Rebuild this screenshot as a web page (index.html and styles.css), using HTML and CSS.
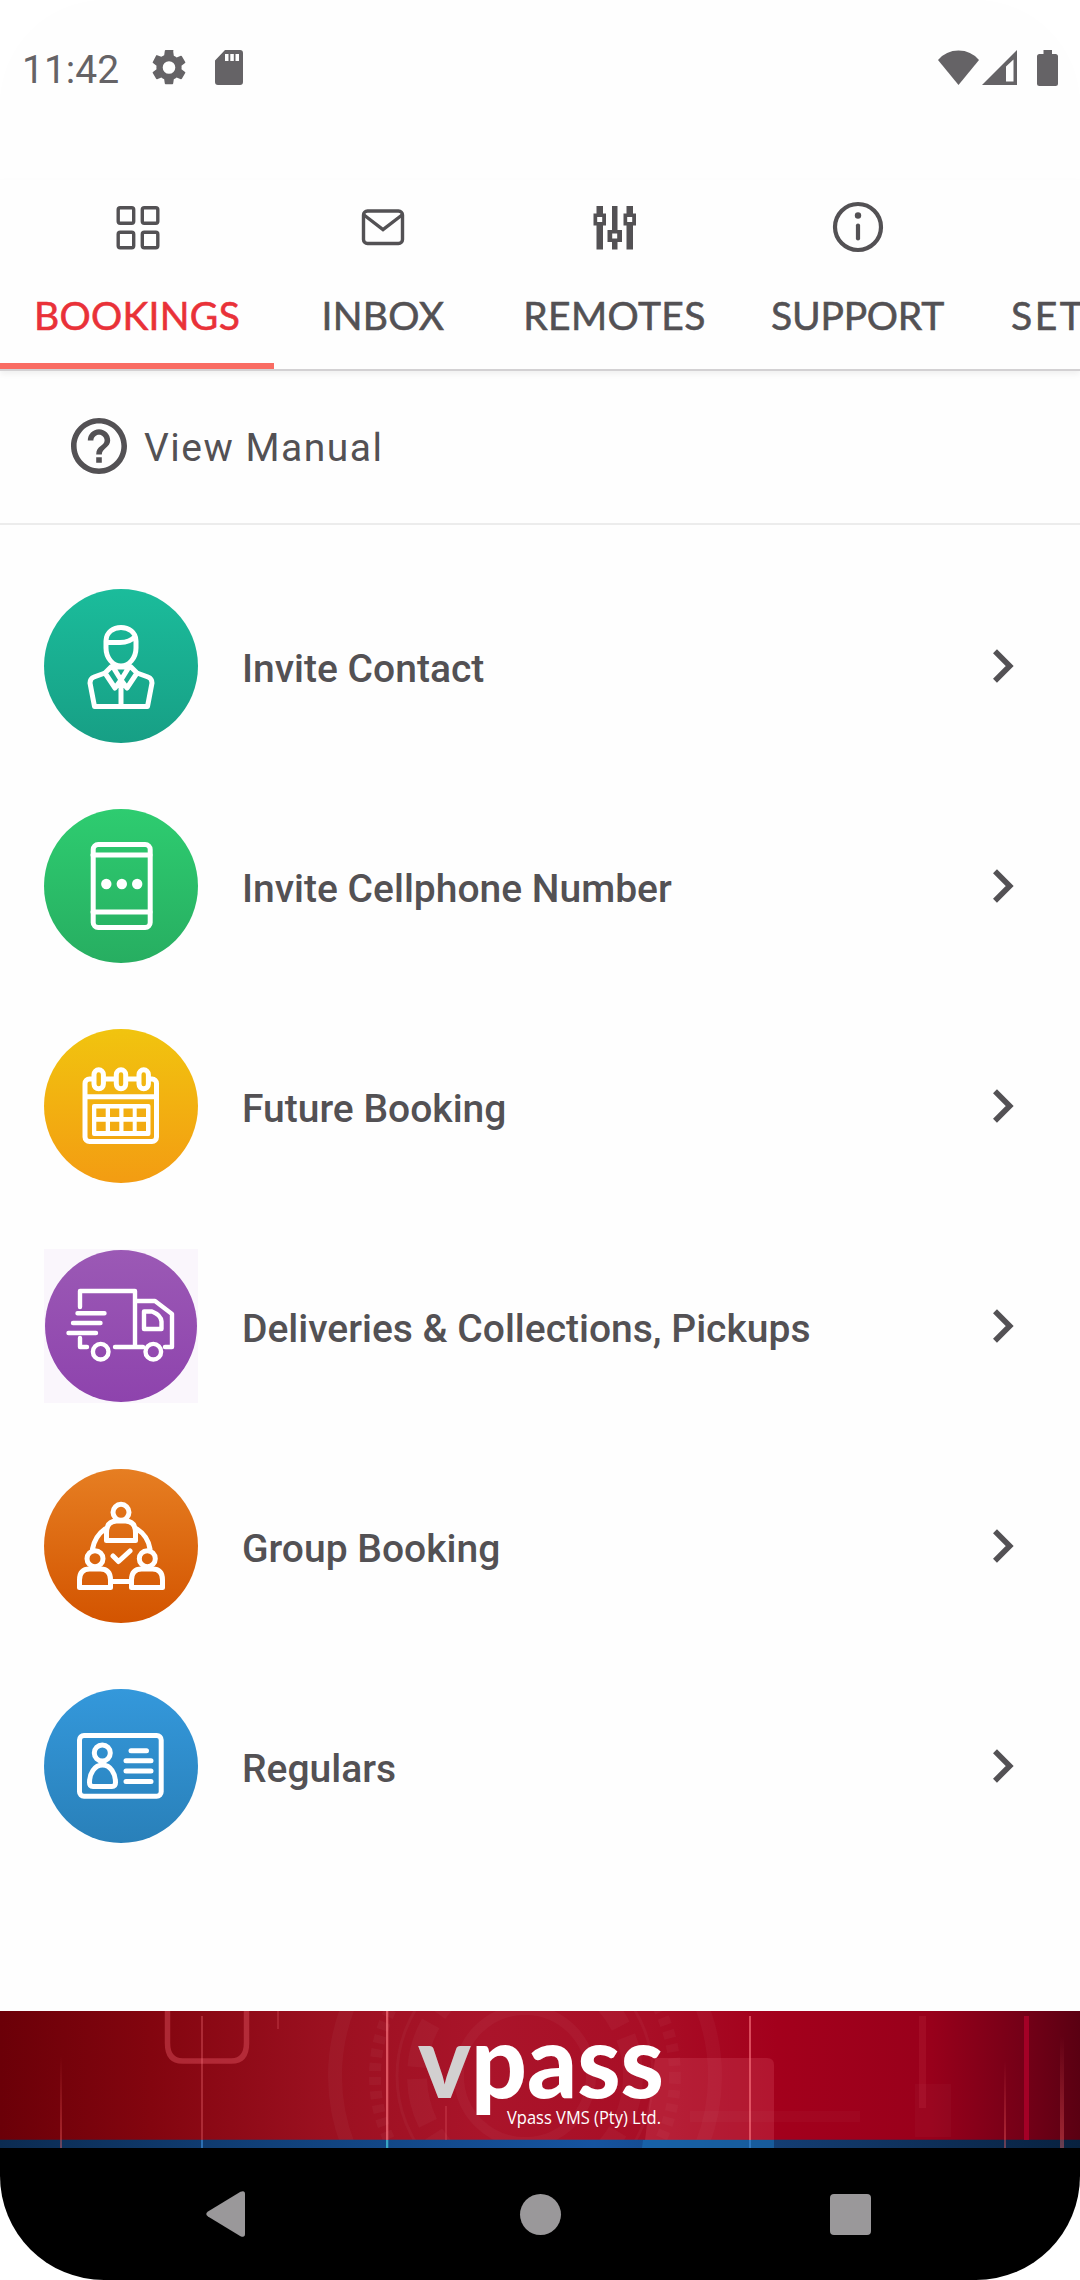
FILE: index.html
```html
<!DOCTYPE html>
<html lang="en">
<head>
<meta charset="utf-8">
<title>Vpass</title>
<link rel="stylesheet" href="styles.css">
</head>
<body>
<div class="phone">
  <header class="status">
    <span class="time">11:42</span>
    <svg class="s-gear" viewBox="2.3 2 19.4 20"><path d="M19.14 12.94c.04-.3.06-.61.06-.94s-.02-.64-.07-.94l2.03-1.58a.49.49 0 0 0 .12-.61l-1.92-3.32a.49.49 0 0 0-.59-.22l-2.39.96c-.5-.38-1.03-.7-1.62-.94l-.36-2.54A.48.48 0 0 0 13.920 2h-3.840a.48.48 0 0 0-.47.41l-.36 2.54c-.59.24-1.13.57-1.62.94l-2.39-.96a.48.48 0 0 0-.59.22L2.740 8.870a.48.48 0 0 0 .12.61l2.030 1.580c-.05.3-.09.63-.09.94s.02.64.07.94l-2.030 1.580a.49.49 0 0 0-.12.61l1.920 3.320c.12.22.37.29.59.22l2.390-.96c.5.38 1.030.7 1.620.94l.36 2.540c.05.24.24.41.48.41h3.840c.24 0 .44-.17.47-.41l.36-2.540c.59-.24 1.130-.56 1.620-.94l2.390.96c.22.08.47 0 .59-.22l1.920-3.320a.48.48 0 0 0-.12-.61zM12 15.600a3.600 3.600 0 1 1 0-7.200 3.600 3.600 0 0 1 0 7.200z"/></svg>
    <svg class="s-sd" viewBox="0 0 28 35"><path fill-rule="evenodd" d="M10 0h15a3 3 0 0 1 3 3v29a3 3 0 0 1-3 3H3a3 3 0 0 1-3-3V10.500zM10 4v7h3.500V4zm5.300 0v7h3.500V4zm5.200 0v7H24V4z"/></svg>
    <span class="spacer"></span>
    <svg class="s-wifi" viewBox="0 0 41 35"><path d="M0 10Q8 .5 20.500.5T41 10L20.500 35z"/></svg>
    <svg class="s-signal" viewBox="0 0 35 35"><path fill-rule="evenodd" d="M35 0v35H0zM31.500 9.500L24 16.500V31.500h7.500z"/></svg>
    <svg class="s-battery" viewBox="0 0 21 36"><path d="M6.500 0h8.500v4h3.500A2.500 2.500 0 0 1 21 6.500v27a2.500 2.500 0 0 1-2.500 2.500h-16A2.500 2.500 0 0 1 0 33.500v-27A2.500 2.500 0 0 1 2.500 4h4z"/></svg>
  </header>

  <nav class="tabs">
    <a class="tab active t-bookings">
      <svg class="tab-icon" viewBox="0 0 54 54"><g class="line"><rect x="8.200" y="7.700" width="15.500" height="15.500" rx="2"/><rect x="32.300" y="7.700" width="15.500" height="15.500" rx="2"/><rect x="8.200" y="32.300" width="15.500" height="15.500" rx="2"/><rect x="32.300" y="32.300" width="15.500" height="15.500" rx="2"/></g></svg>
      <span>BOOKINGS</span>
    </a>
    <a class="tab t-inbox">
      <svg class="tab-icon" viewBox="0 0 54 54"><g class="line"><rect x="7.500" y="11" width="39" height="32.500" rx="4"/><path d="M8 15l19 14.500L46 15"/></g></svg>
      <span>INBOX</span>
    </a>
    <a class="tab t-remotes">
      <svg class="tab-icon" viewBox="0 0 54 54"><path d="M8.500 6h6.500v7.500h3v12h-3v24h-6.500v-24h-3v-12h3zm15.500 0h5.500v24h4.500v12h-4.500v7.500H24v-7.500h-4.500V30H24zm14.500 0h6.500v7.500h3v12h-3v24h-6.500v-24h-3v-12h3z"/><path class="hole" d="M9.200 17h5v5h-5zm15 16.500h5v5h-5zm15-16.500h5v5h-5z"/></svg>
      <span>REMOTES</span>
    </a>
    <a class="tab t-support">
      <svg class="tab-icon" viewBox="0 0 54 54"><circle class="ring" cx="27" cy="27" r="23"/><circle cx="27" cy="15.500" r="3.200"/><path class="ring" stroke-linecap="round" d="M27 25.500v13"/></svg>
      <span>SUPPORT</span>
    </a>
    <a class="tab t-settings">
      <span class="tab-icon"></span>
      <span>SETTINGS</span>
    </a>
  </nav>

  <section class="manual">
    <svg class="help" viewBox="2 2 20 20"><path d="M11 18h2v-2h-2v2zm1-16C6.480 2 2 6.480 2 12s4.480 10 10 10 10-4.480 10-10S17.520 2 12 2zm0 18c-4.410 0-8-3.590-8-8s3.590-8 8-8 8 3.590 8 8-3.590 8-8 8zm0-14c-2.210 0-4 1.790-4 4h2c0-1.100.9-2 2-2s2 .9 2 2c0 2-3 1.750-3 5h2c0-2.250 3-2.500 3-5 0-2.210-1.790-4-4-4z"/></svg>
    <span>View Manual</span>
  </section>

  <main class="menu">
    <a class="row">
      <svg class="badge teal" viewBox="0 0 154 154"><path d="M62 52c0-18 30-18 30 0v7c0 10-7 18-15 18s-15-8-15-18zM62 53.500h14q10 0 15-6M68 78h18M69 78l8 13 8-13M67 78l-6 6 10 15 6-8 6 8 10-15-6-6M61 84l-11 4q-4 1.500-4 6l4.500 23.500h53L108 94q0-4.500-4-6l-11-4M77 91v26"/></svg>
      <span class="label">Invite Contact</span>
      <svg class="chev" viewBox="0 0 21 34"><path d="M2 2.300l14.700 14.700L2 31.700"/></svg>
    </a>
    <a class="row">
      <svg class="badge green" viewBox="0 0 154 154"><rect x="49.200" y="35.500" width="57" height="83" rx="5"/><path d="M49 46h57M49 103h57"/><g class="solid"><circle cx="62.300" cy="75" r="5.200"/><circle cx="77.800" cy="75" r="5.200"/><circle cx="93.200" cy="75" r="5.200"/></g></svg>
      <span class="label">Invite Cellphone Number</span>
      <svg class="chev" viewBox="0 0 21 34"><path d="M2 2.300l14.700 14.700L2 31.700"/></svg>
    </a>
    <a class="row">
      <svg class="badge yellow" viewBox="0 0 154 154"><path d="M49 50h-3.500a4.500 4.500 0 0 0-4.500 4.500V108a4.500 4.500 0 0 0 4.500 4.500h62.500a4.500 4.500 0 0 0 4.500-4.500V54.500A4.500 4.500 0 0 0 108 50h-3M60 50h11M83 50h11M41 67.700h71.500"/><rect x="50" y="40.800" width="9.400" height="19" rx="4.700"/><rect x="72.300" y="40.800" width="9.400" height="19" rx="4.700"/><rect x="95" y="40.800" width="9.400" height="19" rx="4.700"/><path class="solid" fill-rule="evenodd" d="M50 75h54.500q2 0 2 2v28q0 2-2 2H50q-2 0-2-2V77q0-2 2-2zM52.300 79.500v8.500h9.400v-8.500zm13.700 0v8.500h9.300v-8.500zm13.500 0v8.500h9.200v-8.500zm13.200 0v8.500h9.300v-8.500zM52.300 92.700v9.300h9.400v-9.300zm13.700 0v9.300h9.300v-9.300zm13.500 0v9.300h9.200v-9.300zm13.200 0v9.300h9.300v-9.300z"/></svg>
      <span class="label">Future Booking</span>
      <svg class="chev" viewBox="0 0 21 34"><path d="M2 2.300l14.700 14.700L2 31.700"/></svg>
    </a>
    <a class="row">
      <span class="plate"><svg class="badge purple" viewBox="1 1 152 152"><g class="thin"><path d="M36 58V42h55v56M36 89v9h7M71 98h28M33.500 64.300h27M29 74h27.500M24.500 84H52M91 52h20l17 13v33h-7M100 62.500h8q9 3.500 9.500 10V80H100z"/><circle cx="56.700" cy="102.700" r="7.800"/><circle cx="109.300" cy="102.700" r="7.800"/></g></svg></span>
      <span class="label">Deliveries &amp; Collections, Pickups</span>
      <svg class="chev" viewBox="0 0 21 34"><path d="M2 2.300l14.700 14.700L2 31.700"/></svg>
    </a>
    <a class="row">
      <svg class="badge orange" viewBox="0 0 154 154"><circle cx="77" cy="43.300" r="8"/><path d="M62.500 71.500V64q0-12 10-12h9q10 0 10 12v7.500zM35.500 118.500V111q0-11 10-11h11q10 0 10 11v7.500zM87.500 118.500V111q0-11 10-11h11q10 0 10 11v7.500zM61 60q-10 7-12.500 20M93 60q11 7 13 20M67 112.500h20M69 87l5.500 5.500L86 82"/><circle cx="51" cy="89.700" r="8"/><circle cx="103.300" cy="89.700" r="8"/></svg>
      <span class="label">Group Booking</span>
      <svg class="chev" viewBox="0 0 21 34"><path d="M2 2.300l14.700 14.700L2 31.700"/></svg>
    </a>
    <a class="row">
      <svg class="badge blue" viewBox="0 0 154 154"><rect x="35.500" y="46.500" width="81.700" height="60.700" rx="4.500"/><circle cx="58.300" cy="64" r="8"/><path d="M49 97.500q-3.500 0-3.500-4c0-9 5-17.500 13-17.500s13 8.500 13 17.500q0 4-3.500 4zM87 61.700h15.500M82 71.800h25M82 82h25M82 92.500h25"/></svg>
      <span class="label">Regulars</span>
      <svg class="chev" viewBox="0 0 21 34"><path d="M2 2.300l14.700 14.700L2 31.700"/></svg>
    </a>
  </main>

  <svg class="banner" viewBox="0 0 1080 137">
    <defs>
      <linearGradient id="red"><stop offset="0" stop-color="#6b0008"/><stop offset=".14" stop-color="#83050f"/><stop offset=".3" stop-color="#9b1020"/><stop offset=".45" stop-color="#aa142a"/><stop offset=".6" stop-color="#a90e26"/><stop offset=".72" stop-color="#a3001c"/><stop offset=".86" stop-color="#99001b"/><stop offset=".95" stop-color="#730017"/><stop offset="1" stop-color="#5a0012"/></linearGradient>
      <linearGradient id="navy"><stop offset="0" stop-color="#0c2b51"/><stop offset=".25" stop-color="#114079"/><stop offset=".55" stop-color="#1654a0"/><stop offset=".7" stop-color="#153f76"/><stop offset="1" stop-color="#08213f"/></linearGradient>
      <linearGradient id="fade" x2="0" y2="1"><stop offset="0" stop-color="#f66" stop-opacity="0"/><stop offset="1" stop-color="#f66" stop-opacity=".4"/></linearGradient>
    </defs>
    <rect width="1080" height="129" fill="url(#red)"/>
    <g fill="none" stroke="#fff" stroke-opacity=".035">
      <circle cx="525" cy="65" r="190" stroke-width="14"/>
      <circle cx="525" cy="65" r="150" stroke-width="12" stroke-dasharray="8 6"/>
      <circle cx="525" cy="65" r="128" stroke-width="3"/>
      <circle cx="525" cy="65" r="108" stroke-width="20" stroke-dasharray="46 12"/>
      <circle cx="525" cy="65" r="66" stroke-width="10"/>
    </g>
    <path d="M167.500 0v32q0 18 15 18h49q15 0 15-18V0" fill="none" stroke="#e0535f" stroke-opacity=".45" stroke-width="5.500"/>
    <rect y="128.700" width="1080" height="8.300" fill="url(#navy)"/>
    <path d="M655 47h112q7 0 7 7v75H645z" fill="#e0566c" fill-opacity=".25"/>
    <path d="M643 129h131v8H642z" fill="#1a6fb5" fill-opacity=".6"/>
    <g fill="#ff7a83">
      <rect x="60" y="45" width="2" height="92" fill="url(#fade)"/>
      <rect x="201" y="5" width="2" height="124" opacity=".3"/>
      <rect x="277" width="2" height="18" opacity=".2"/>
      <rect x="386" width="2.300" height="129" opacity=".65"/>
      <rect x="445" y="95" width="2" height="34" opacity=".2"/>
      <rect x="749" y="5" width="2" height="124" opacity=".6"/>
      <rect x="919" y="5" width="7" height="92" opacity=".09"/>
      <rect x="1004" y="50" width="2" height="87" fill="url(#fade)"/>
    </g>
    <path d="M386 129h2.300v8H386z" fill="#39a6c4"/>
    <path d="M749 129h2v8h-2zM201 129h2v8h-2z" fill="#3a86cf" opacity=".7"/>
    <path d="M690 100h170v11H690zM915 73h36v53h-36z" fill="#fff" opacity=".025"/>
    <rect x="1024" y="5" width="5" height="124" fill="#b0002b" opacity=".8"/>
    <rect x="1060" y="25" width="4" height="112" fill="url(#fade)"/>
    <g class="logo">
      <text class="logo-v" x="418" y="87" textLength="53" lengthAdjust="spacingAndGlyphs">v</text>
      <text x="471" y="87" textLength="193" lengthAdjust="spacingAndGlyphs">pass</text>
    </g>
    <text class="company" x="507" y="113" textLength="154" lengthAdjust="spacingAndGlyphs">Vpass VMS (Pty) Ltd.</text>
  </svg>

  <footer class="navbar">
    <svg class="back" viewBox="0 0 39 46"><path d="M2 20.500L34.500.8Q39-1 39 3v40q0 4-4.500 2.200L2 25.500q-3.500-2.500 0-5z"/></svg>
    <span class="home"></span>
    <span class="recent"></span>
  </footer>
</div>
</body>
</html>
```
FILE: styles.css
```css
* { box-sizing: border-box; }

body {
  margin: 0;
  background: #fff;
  font-family: Roboto, sans-serif;
  color: #535154;
}

.phone {
  display: flex;
  flex-direction: column;
  width: 1080px;
  height: 2280px;
  overflow: hidden;
  border-radius: 104px;
  background: #fefefe;
}

svg { display: block; flex: none; }

/* status bar */
.status {
  display: flex;
  align-items: flex-start;
  height: 180px;
  padding: 50px 22px 0 22px;
  color: #656366;
  fill: #656366;
}
.time { width: 130px; font-size: 39px; line-height: 40px; }
.s-gear { width: 34px; height: 35px; }
.s-sd { width: 28px; height: 35px; margin-left: 29px; }
.spacer { flex: 1; }
.s-wifi { width: 41px; height: 35px; }
.s-signal { width: 35px; height: 35px; margin-left: 3px; }
.s-battery { width: 21px; height: 36px; margin-left: 20px; }

/* tabs */
.tabs {
  display: flex;
  height: 191px;
  flex: none;
  overflow: hidden;
  border-bottom: 2px solid #d3d1d3;
  box-shadow: 0 3px 6px rgba(0, 0, 0, .06);
}
.tab {
  display: flex;
  flex: none;
  flex-direction: column;
  align-items: center;
  height: 189px;
  padding-top: 20px;
  font-family: Lato, sans-serif;
  font-size: 39px;
  font-weight: 400;
  line-height: 48px;
  white-space: nowrap;
  fill: #535154;
  -webkit-text-stroke: .6px currentColor;
}
.tab span:last-child { margin-top: 37px; }
.active { color: #e93138; border-bottom: 6px solid #f96c63; }
.t-bookings { width: 274px; letter-spacing: .3px; }
.t-inbox { width: 218px; letter-spacing: .3px; }
.t-remotes { width: 245px; letter-spacing: .4px; }
.t-support { width: 241px; letter-spacing: -.2px; }
.t-settings { align-items: flex-start; padding-left: 33px; letter-spacing: 2.5px; }
.tab-icon { width: 54px; height: 54px; flex: none; }
.line, .ring { fill: none; stroke: #535154; stroke-width: 3.4; }
.ring { stroke-width: 4.2; }
.hole { fill: #fefefe; }

/* manual link */
.manual {
  display: flex;
  align-items: center;
  flex: none;
  height: 154px;
  padding: 0 0 2px 71px;
  gap: 17px;
  border-bottom: 2px solid #ececec;
  font-size: 39px;
  letter-spacing: 1.5px;
}
.manual span { padding-top: 3px; }
.help { width: 56px; height: 56px; fill: #535154; }

/* booking options */
.menu {
  display: flex;
  flex: 1;
  flex-direction: column;
  gap: 66px;
  padding: 64px 66px 0 44px;
}
.row { display: flex; align-items: center; height: 154px; }
.label {
  flex: 1;
  padding: 5px 0 0 44px;
  font-size: 39px;
  font-weight: 500;
}
.badge {
  width: 154px;
  height: 154px;
  border-radius: 50%;
  fill: none;
  stroke: #fff;
  stroke-width: 5;
  stroke-linejoin: round;
  stroke-linecap: round;
}
.solid { fill: #fff; stroke: none; }
.thin { stroke-width: 4.4; }
.plate { padding: 1px; background: #faf6fc; }
.plate .badge { width: 152px; height: 152px; }
.teal { background: linear-gradient(#1bbc9b, #179f85); }
.green { background: linear-gradient(#2ecc70, #27ae61); }
.yellow { background: linear-gradient(#f1c40f, #f39c12); }
.purple { background: linear-gradient(#9b59b5, #8e43ad); }
.orange { background: linear-gradient(#e67e22, #d35400); }
.blue { background: linear-gradient(#3498db, #2980b9); }
.chev { width: 21px; height: 34px; fill: none; stroke: #535154; stroke-width: 5.6; }

/* brand banner */
.banner { width: 1080px; height: 137px; }
.logo { font-family: Lato, sans-serif; font-size: 101px; font-weight: 900; fill: #fff; }
.logo-v { fill: #d2d0d0; }
.company { font-family: "Open Sans", sans-serif; font-size: 19px; fill: #fff; }

/* system navigation */
.navbar {
  display: grid;
  grid-template-columns: 39px 41px 41px;
  column-gap: 275px;
  flex: none;
  align-items: center;
  height: 132px;
  padding-left: 206px;
  background: #000;
}
.back { width: 39px; height: 46px; fill: #9a989a; }
.home { width: 41px; height: 41px; border-radius: 50%; background: #9a989a; }
.recent { width: 41px; height: 41px; margin-left: -6px; border-radius: 4px; background: #9a989a; }
```
